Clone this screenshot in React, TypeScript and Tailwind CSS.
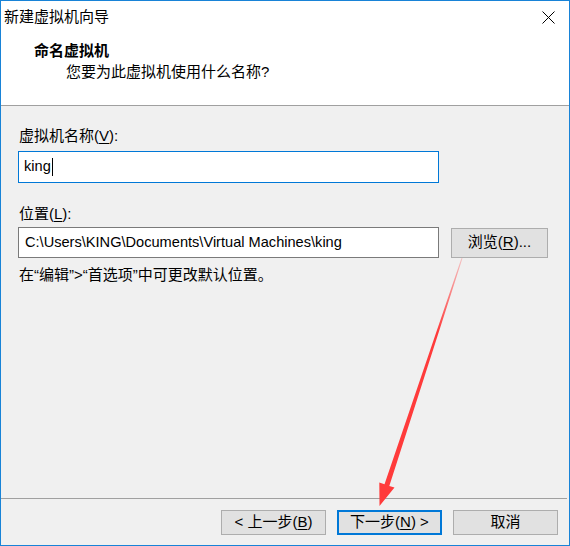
import React from 'react';

const font = { fontFamily: '"Liberation Sans", "Noto Sans CJK SC", sans-serif' };

const U: React.FC<{ children: React.ReactNode }> = ({ children }) => (
    <span className="underline underline-offset-2 decoration-1">{children}</span>
);

const Btn: React.FC<{ children: React.ReactNode; primary?: boolean }> = ({ children, primary }) => (
    <button
        className={`w-[105px] h-[25px] flex items-center justify-center bg-[#e1e1e1] text-[15px] text-black ${
            primary ? 'border-2 border-[#0078d7]' : 'border border-[#adadad]'
        }`}
    >
        {children}
    </button>
);

export default function App() {
    return (
        <div
            className="relative w-[570px] h-[546px] border border-[#1883d7] bg-[#f0f0f0] flex flex-col text-black overflow-hidden"
            style={font}
        >
            {/* Title bar + header */}
            <div className="bg-white shrink-0">
                <div className="h-[31px] flex items-center justify-between pl-[3px] pr-[14px]">
                    <span className="text-[15px] leading-none">新建虚拟机向导</span>
                    <svg width="13" height="13" viewBox="0 0 13 13" className="mt-[1px]">
                        <path d="M0.5 0.5 L12.5 12.5 M12.5 0.5 L0.5 12.5" stroke="#000" strokeWidth="1" />
                    </svg>
                </div>
                <div className="h-[73px] pl-[33px] pt-[9px]">
                    <div className="text-[15px] font-bold leading-[20px]">命名虚拟机</div>
                    <div className="text-[15px] leading-[20px] pl-[32px] mt-[1px]">您要为此虚拟机使用什么名称?</div>
                </div>
            </div>
            <div className="h-px bg-[#a0a0a0] shrink-0" />

            {/* Body */}
            <div className="flex-1 flex flex-col pl-[17px] text-[15px]">
                <div className="mt-[20px] leading-[20px] pl-[1px]">
                    虚拟机名称(<U>V</U>):
                </div>
                <div className="mt-[5px] w-[421px] h-[32px] bg-white border border-[#0078d7] flex items-center pl-[5px]">
                    <span className="text-[14.6px]">king</span>
                    <span className="w-px h-[18px] bg-black ml-[1px]" />
                </div>
                <div className="mt-[21px] leading-[20px] pl-[1px]">
                    位置(<U>L</U>):
                </div>
                <div className="mt-[3px] flex items-center gap-[12px]">
                    <div className="w-[421px] h-[31px] bg-white border border-[#7a7a7a] flex items-center pl-[6px] text-[14.6px]">
                        C:\Users\KING\Documents\Virtual Machines\king
                    </div>
                    <button className="w-[97px] h-[30px] bg-[#e1e1e1] border border-[#adadad] text-[15px] flex items-center justify-center">
                        浏览(<U>R</U>)...
                    </button>
                </div>
                <div className="mt-[7px] leading-[20px] pl-[1px]">在“编辑”&gt;“首选项”中可更改默认位置。</div>
            </div>

            {/* Footer */}
            <div className="h-px bg-[#a0a0a0] mr-[2px] shrink-0" />
            <div className="shrink-0 flex justify-end gap-[11px] pt-[11px] pb-[10px] pr-[11px]">
                <Btn>
                    &lt; 上一步(<U>B</U>)
                </Btn>
                <Btn primary>
                    下一步(<U>N</U>) &gt;
                </Btn>
                <Btn>取消</Btn>
            </div>

            {/* Red annotation arrow */}
            <svg className="absolute left-[-1px] top-[-1px] pointer-events-none" width="570" height="546">
                <defs>
                    <linearGradient id="arrowFade" x1="462" y1="258" x2="380" y2="506" gradientUnits="userSpaceOnUse">
                        <stop offset="0" stopColor="#ff3b3b" stopOpacity="0.25" />
                        <stop offset="0.3" stopColor="#ff3b3b" stopOpacity="1" />
                        <stop offset="1" stopColor="#ff3b3b" stopOpacity="1" />
                    </linearGradient>
                </defs>
                <polygon
                    points="461.5,257.9 462.5,258.2 389.3,485.9 394.5,487.6 379.5,506 379.3,482.6 384.5,484.3"
                    fill="url(#arrowFade)"
                />
            </svg>
        </div>
    );
}
